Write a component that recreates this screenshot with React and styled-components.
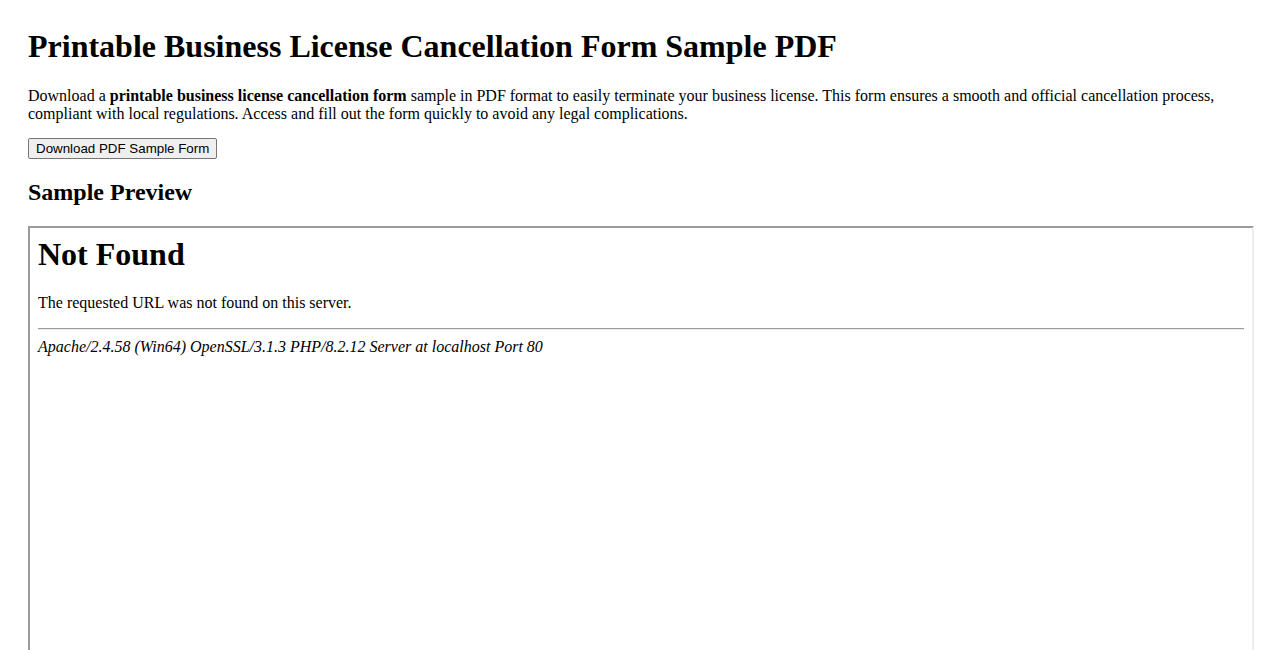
import React from 'react';
import styled, { createGlobalStyle } from 'styled-components';

const GlobalStyle = createGlobalStyle`
  body {
    margin: 8px;
    padding: 20px;
    font-family: "Liberation Serif", "Times New Roman", serif;
    color: #000;
    background: #fff;
  }
`;

const Title = styled.h1`
  font-size: 32px;
  font-weight: bold;
  margin: 0 0 22px;
`;

const Intro = styled.p`
  font-size: 16px;
  margin: 0 0 15px;
  line-height: 18px;
`;

const DownloadButton = styled.button`
  font-family: "Liberation Sans", Arial, sans-serif;
  font-size: 13.33px;
  height: 21px;
  padding: 1px 7px;
  border: 1px solid #767676;
  border-radius: 2px;
  background: #efefef;
  color: #000;
`;

const SubTitle = styled.h2`
  font-size: 24px;
  font-weight: bold;
  margin: 20px 0 20px;
`;

const Frame = styled.div`
  width: 100%;
  height: 600px;
  box-sizing: content-box;
  border: 2px solid;
  border-color: #9a9a9a #eeeeee #eeeeee #9a9a9a;
`;

const FrameBody = styled.div`
  padding: 8px;
`;

const FrameTitle = styled.h1`
  font-size: 32px;
  font-weight: bold;
  margin: 0 0 21px;
`;

const FrameText = styled.p`
  font-size: 16px;
  margin: 0 0 16px;
`;

const Rule = styled.hr`
  border: none;
  border-top: 1px solid #9a9a9a;
  border-bottom: 1px solid #eee;
  margin: 8px 0;
`;

const Address = styled.address`
  font-size: 16px;
  font-style: italic;
`;

export default function App() {
  return (
    <>
      <GlobalStyle />
      <Title>Printable Business License Cancellation Form Sample PDF</Title>
      <Intro>
        Download a <strong>printable business license cancellation form</strong> sample in PDF format to easily terminate your business license. This form ensures a smooth and official cancellation process, compliant with local regulations. Access and fill out the form quickly to avoid any legal complications.
      </Intro>
      <DownloadButton type="button">Download PDF Sample Form</DownloadButton>
      <SubTitle>Sample Preview</SubTitle>
      <Frame>
        <FrameBody>
          <FrameTitle>Not Found</FrameTitle>
          <FrameText>The requested URL was not found on this server.</FrameText>
          <Rule />
          <Address>Apache/2.4.58 (Win64) OpenSSL/3.1.3 PHP/8.2.12 Server at localhost Port 80</Address>
        </FrameBody>
      </Frame>
    </>
  );
}
